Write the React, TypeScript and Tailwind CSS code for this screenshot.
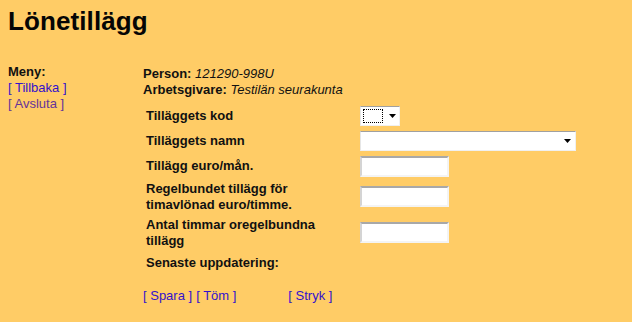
const font = "font-['Liberation_Sans',Arial,sans-serif]";

function Field({ className = "" }: { className?: string }) {
  return (
    <div
      className={`h-[21px] border-2 border-t-[#a8a8a8] border-l-[#d4d4d4] border-r-[#f4f4f4] border-b-[#f4f4f4] bg-white ${className}`}
    />
  );
}

function Select({ width, focus = false }: { width: string; focus?: boolean }) {
  return (
    <div
      className={`flex h-[20px] items-stretch border border-t-[#a0a0a0] border-l-[#e6e6e6] border-r-[#f0f0f0] border-b-[#f0f0f0] bg-white ${width}`}
    >
      <div className="flex-1 p-[2px]">
        {focus && <div className="h-full w-[20px] border border-dotted border-black" />}
      </div>
      <div className="flex w-[16px] items-center justify-center">
        <svg width="7" height="4" viewBox="0 0 7 4">
          <path d="M0 0h7L3.5 4z" fill="#000" />
        </svg>
      </div>
    </div>
  );
}

function Row({ label, children, tall = false }: { label: React.ReactNode; children?: React.ReactNode; tall?: boolean }) {
  return (
    <div className={`flex items-center ${tall ? "min-h-[35px]" : "min-h-[24px]"}`}>
      <div className="w-[217px] pl-[3px] text-[13px] font-bold leading-[16px] text-[#111]">{label}</div>
      <div className="flex items-center">{children}</div>
    </div>
  );
}

export default function App() {
  return (
    <div className={`h-[322px] w-[632px] overflow-hidden bg-[#ffcc66] px-[8px] text-[13px] text-black ${font}`}>
      <h1 className="pt-[5px] text-[26px] font-bold leading-[32px] tracking-[0.1px] text-[#050505]">Lönetillägg</h1>
      <div className="mt-[26px] flex">
        <div className="w-[135px] pt-[1px] leading-[16px]">
          <div className="font-bold text-[#111]">Meny:</div>
          <div className="text-[#3311cc]">[ Tillbaka ]</div>
          <div className="text-[#663399]">[ Avsluta ]</div>
        </div>
        <div className="flex-1 pt-[3px]">
          <div className="leading-[16px] text-[#111]">
            <div>
              <span className="font-bold">Person: </span>
              <span className="italic">121290-998U</span>
            </div>
            <div>
              <span className="font-bold">Arbetsgivare: </span>
              <span className="italic">Testilän seurakunta</span>
            </div>
          </div>
          <div className="mt-[6px] flex flex-col gap-[1px]">
            <Row label="Tilläggets kod">
              <Select width="w-[40px]" focus />
            </Row>
            <Row label="Tilläggets namn">
              <Select width="w-[216px]" />
            </Row>
            <Row label="Tillägg euro/mån.">
              <Field className="w-[89px]" />
            </Row>
            <Row label={<>Regelbundet tillägg för<br />timavlönad euro/timme.</>} tall>
              <Field className="w-[89px]" />
            </Row>
            <Row label={<>Antal timmar oregelbundna<br />tillägg</>} tall>
              <Field className="w-[89px]" />
            </Row>
            <Row label="Senaste uppdatering:" />
          </div>
          <div className="mt-[13px] flex leading-[16px] text-[#3311cc]">
            <span>[ Spara ]</span>
            <span className="ml-[4px]">[ Töm ]</span>
            <span className="ml-[52px]">[ Stryk ]</span>
          </div>
        </div>
      </div>
    </div>
  );
}
